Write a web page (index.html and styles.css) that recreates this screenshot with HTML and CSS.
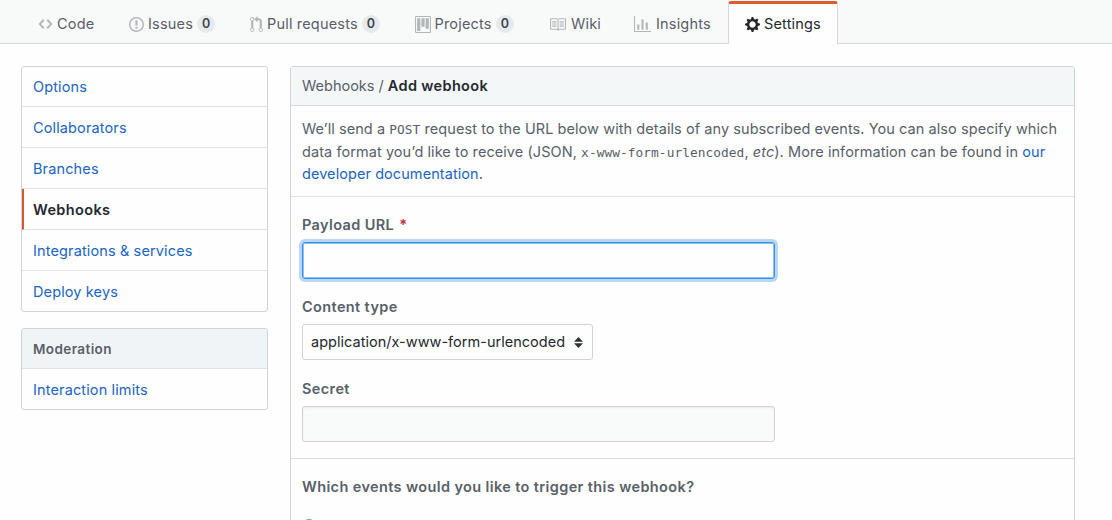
FILE: index.html
```
<!DOCTYPE html>
<html lang="en">
<head>
<meta charset="utf-8">
<title>Add webhook</title>
<link rel="stylesheet" href="styles.css">
</head>
<body>
<nav class="tabs">
  <a class="tab tab-code"><svg class="icon" width="15" height="16" viewBox="0 0 14 16"><path d="M9.500 3L8 4.500 11.500 8 8 11.500 9.500 13 14 8 9.500 3zm-5 0L0 8l4.500 5L6 11.500 2.500 8 6 4.500 4.500 3z"/></svg><span class="label">Code</span></a>
  <a class="tab tab-issues"><svg class="icon" width="15" height="17" viewBox="0 0 14 16"><path d="M7 2.300c3.140 0 5.700 2.560 5.700 5.700s-2.560 5.700-5.700 5.700A5.710 5.710 0 0 1 1.300 8c0-3.140 2.560-5.700 5.700-5.700zM7 1C3.140 1 0 4.140 0 8s3.140 7 7 7 7-3.140 7-7-3.140-7-7-7zm1 3H6v5h2V4zm0 6H6v2h2v-2z"/></svg><span class="label">Issues</span><span class="count">0</span></a>
  <a class="tab tab-pulls"><svg class="icon" width="13" height="17" viewBox="0 0 12 16"><path d="M11 11.280V5c-.03-.78-.34-1.470-.94-2.060C9.460 2.350 8.780 2.030 8 2H7V0L4 3l3 3V4h1c.27.020.48.110.69.310.21.200.30.420.31.690v6.280A1.993 1.993 0 0 0 10 15a1.993 1.993 0 0 0 1-3.720zm-1 2.920c-.66 0-1.200-.55-1.200-1.200 0-.65.55-1.200 1.200-1.200.65 0 1.200.55 1.200 1.200 0 .65-.55 1.200-1.200 1.200zM4 3c0-1.110-.89-2-2-2a1.993 1.993 0 0 0-1 3.720v6.560A1.993 1.993 0 0 0 2 15a1.993 1.993 0 0 0 1-3.720V4.720c.59-.34 1-.98 1-1.720zm-.8 10c0 .66-.55 1.200-1.200 1.200-.65 0-1.200-.55-1.200-1.200 0-.65.55-1.200 1.200-1.200.65 0 1.200.55 1.200 1.200zM2 4.200C1.340 4.200.8 3.650.8 3c0-.65.55-1.200 1.200-1.200.65 0 1.200.55 1.200 1.200 0 .65-.55 1.200-1.200 1.200z"/></svg><span class="label">Pull requests</span><span class="count">0</span></a>
  <a class="tab tab-projects"><svg class="icon" width="16" height="17" viewBox="0 0 15 16"><path fill-rule="evenodd" d="M10 12h3V2h-3v10zm-4-2h3V2H6v8zm-4 4h3V2H2v12zm-1 1h13V1H1v14zM14 0H1a1 1 0 0 0-1 1v14a1 1 0 0 0 1 1h13a1 1 0 0 0 1-1V1a1 1 0 0 0-1-1z"/></svg><span class="label">Projects</span><span class="count">0</span></a>
  <a class="tab tab-wiki"><svg class="icon" width="17" height="17" viewBox="0 0 16 16"><path d="M3 5h4v1H3V5zm0 3h4V7H3v1zm0 2h4V9H3v1zm11-5h-4v1h4V5zm0 2h-4v1h4V7zm0 2h-4v1h4V9zm2-6v9c0 .55-.45 1-1 1H9.500l-1 1-1-1H2c-.55 0-1-.45-1-1V3c0-.55.45-1 1-1h5.500l1 1 1-1H15c.55 0 1 .45 1 1zm-8 .5L7.500 3H2v9h6V3.500zm7-.5H9.500l-.5.5V12h6V3z"/></svg><span class="label">Wiki</span></a>
  <a class="tab tab-insights"><svg class="icon" width="17" height="17" viewBox="0 0 16 16"><path d="M16 14v1H0V0h1v14h15zM5 13H3V8h2v5zm4 0H7V3h2v10zm4 0h-2V6h2v7z"/></svg><span class="label">Insights</span></a>
  <a class="tab tab-settings"><svg class="icon" width="15" height="17" viewBox="0 0 14 16"><path d="M14 8.770v-1.600l-1.940-.64-.45-1.090.88-1.840-1.130-1.130-1.810.91-1.090-.45-.69-1.920h-1.600l-.63 1.940-1.110.45-1.840-.88-1.130 1.130.91 1.810-.45 1.090L0 7.230v1.590l1.940.64.45 1.090-.88 1.840 1.130 1.130 1.810-.91 1.090.45.69 1.920h1.590l.63-1.940 1.110-.45 1.840.88 1.130-1.130-.92-1.810.47-1.090L14 8.750v.02zM7 11c-1.660 0-3-1.340-3-3s1.340-3 3-3 3 1.340 3 3-1.340 3-3 3z"/></svg><span class="label">Settings</span></a>
</nav>
<div class="page">
  <aside class="sidebar">
    <div class="menu">
      <a class="item first">Options</a>
      <a class="item">Collaborators</a>
      <a class="item">Branches</a>
      <a class="item selected">Webhooks</a>
      <a class="item">Integrations &amp; services</a>
      <a class="item">Deploy keys</a>
    </div>
    <div class="menu">
      <div class="item heading">Moderation</div>
      <a class="item">Interaction limits</a>
    </div>
  </aside>
  <main class="panel">
    <header class="panel-head">Webhooks / <b>Add webhook</b></header>
    <p class="intro"><span class="line">We’ll send a <code>POST</code> request to the URL below with details of any subscribed events. You can also specify which</span><span class="line">data format you’d like to receive (JSON, <code>x-www-form-urlencoded</code>, <em>etc</em>). More information can be found in <a>our</a></span><span class="line"><a>developer documentation</a>.</span></p>
    <form class="fields">
      <label class="name">Payload URL <span class="req">*</span></label>
      <input class="box focused" type="text">
      <label class="name">Content type</label>
      <div class="select"><span>application/x-www-form-urlencoded</span><svg class="arrows" width="9" height="11" viewBox="0 0 9 11"><path d="M4.500 0L9 4.700H0zM4.500 11L0 6.300h9z"/></svg></div>
      <label class="name">Secret</label>
      <input class="box" type="text">
    </form>
    <section class="events">
      <div class="name">Which events would you like to trigger this webhook?</div>
      <label class="choice"><span class="radio"></span><span>Just the push event.</span></label>
    </section>
  </main>
</div>
</body>
</html>
```
FILE: styles.css
```
* { box-sizing: border-box; }
body {
  margin: 0;
  height: 520px;
  overflow: hidden;
  background: #fdfefd;
  color: #586069;
  font: 14.500px/22.600px Inter, "Liberation Sans", sans-serif;
  letter-spacing: .07px;
}
a { color: #1c65c0; }
.tabs {
  display: flex;
  height: 44px;
  padding-left: 22px;
  background: #f8fafa;
  border-bottom: 1px solid #d5d9de;
}
.tab {
  display: flex;
  flex: none;
  align-items: center;
  height: 44px;
  padding: 4px 0 0 16px;
  color: #586069;
  letter-spacing: .18px;
  white-space: nowrap;
}
.tab-code { width: 91px; }
.tab-issues { width: 121px; }
.tab-pulls { width: 165px; }
.tab-projects { width: 134px; }
.tab-wiki { width: 85px; }
.tab-insights { width: 110px; }
.icon { fill: #b1b6b9; flex: none; margin-right: 4px; }
.tab-projects .icon { margin-right: 3.500px; }
.tab-insights .icon { margin-right: 5px; }
.tab-wiki .icon { margin-right: 5px; }
.count {
  height: 18px;
  margin-left: 4px;
  padding: 0 5px;
  border-radius: 9px;
  background: #e7eaec;
  color: #3e444b;
  font-size: 12.500px;
  font-weight: 600;
  line-height: 18px;
}
.tab-settings {
  width: 110px;
  height: 43px;
  margin-top: 1px;
  padding-top: 1px;
  border: 1px solid #d5d9de;
  border-top: 3px solid #da5d2b;
  border-bottom: 0;
  border-radius: 3px 3px 0 0;
  background: #fdfefd;
  color: #24292e;
}
.tab-settings .icon { fill: #24292e; }
.page { display: flex; gap: 22px; padding: 22px 0 0 21px; }
.sidebar { width: 247px; flex: none; letter-spacing: .13px; }
.menu {
  margin-bottom: 16px;
  border: 1px solid #ced4d9;
  border-radius: 3px;
  overflow: hidden;
}
.item {
  display: block;
  height: 41px;
  padding-left: 11px;
  border-bottom: 1px solid #dfe3e7;
  line-height: 41px;
}
.item:last-child { height: 40px; border-bottom: 0; line-height: 41px; }
.first { height: 40px; line-height: 39px; }
.selected {
  padding-left: 9px;
  border-left: 2px solid #d6592f;
  color: #24292e;
  font-weight: 600;
  letter-spacing: .36px;
}
.heading {
  height: 40px;
  background: #f0f4f7;
  font-size: 13.500px;
  font-weight: 600;
  letter-spacing: .4px;
}
.panel {
  width: 785px;
  height: 480px;
  border: 1px solid #ced4d9;
  border-radius: 3px 3px 0 0;
}
.panel-head {
  height: 39px;
  padding-left: 11px;
  border-bottom: 1px solid #d5d9de;
  background: #f4f7f7;
  line-height: 38px;
  letter-spacing: 0;
}
.panel-head b { color: #24292e; font-weight: 600; letter-spacing: .34px; }
.intro {
  height: 91px;
  margin: 0;
  padding: 12px 0 0 11px;
  border-bottom: 1px solid #dfe3e7;
}
.line { display: block; width: max-content; }
code { font: 12.800px "DejaVu Sans Mono", monospace; }
.fields {
  height: 262px;
  padding: 17px 11px 0;
  border-bottom: 1px solid #d8dce0;
}
.name { display: block; height: 22px; font-weight: 600; letter-spacing: .38px; }
.req { margin-left: 1px; color: #c02a38; }
.box {
  display: block;
  width: 473px;
  height: 36px;
  margin: 6px 0 0;
  border: 1px solid #ced4d9;
  border-radius: 3px;
  background: #f9fbfb;
  box-shadow: inset 0 1px 2px rgba(27, 31, 35, .07);
}
.focused {
  height: 37px;
  margin: 6px 0 17px;
  border: 1px solid #3691e8;
  background: #fdfefd;
  box-shadow: 0 0 0 3px #bbd7f5, inset 0 0 0 1px #8dc0f3;
}
.select {
  display: flex;
  align-items: center;
  justify-content: space-between;
  width: 291px;
  height: 36px;
  margin: 6px 0 18px;
  padding: 0 9px 0 8px;
  border: 1px solid #ced4d9;
  border-radius: 3px;
  color: #24292e;
  letter-spacing: .02px;
}
.arrows { fill: #2c3136; }
.events { padding: 17px 11px 0; }
.choice { display: flex; gap: 7px; margin-top: 17px; }
.radio { width: 14px; height: 14px; margin-top: 4px; border: 1px solid #5797e0; border-radius: 50%; }
```
